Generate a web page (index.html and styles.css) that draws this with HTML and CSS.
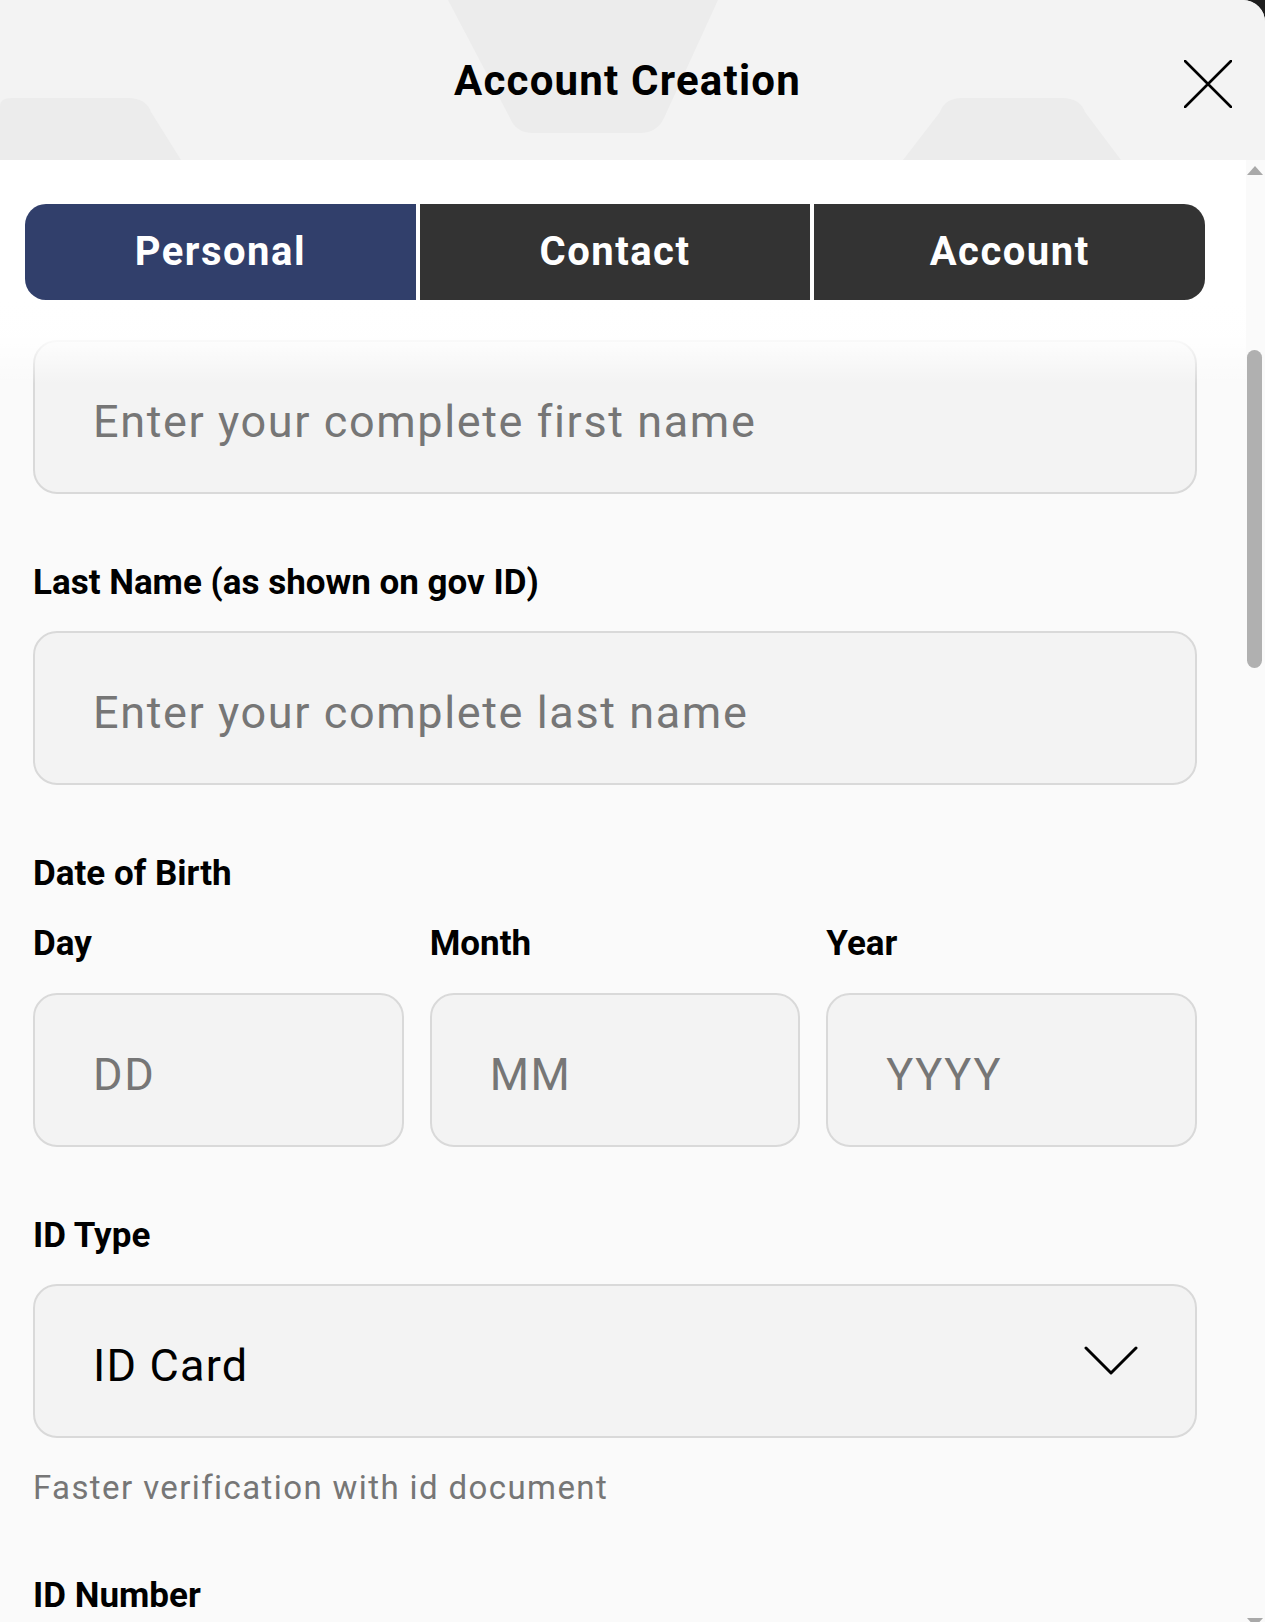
FILE: index.html
```html
<!DOCTYPE html>
<html lang="en">
<head>
<meta charset="utf-8">
<title>Account Creation</title>
<link rel="stylesheet" href="styles.css">
</head>
<body>
<div class="modal">
  <header class="modal-header">
    <svg class="header-art" viewBox="0 0 1265 160" preserveAspectRatio="none" aria-hidden="true">
      <path d="M448 0 H718 L664 118 Q657 133 640 133 H533 Q516 133 510 118 Z"/>
      <path d="M0 106 Q0 98 12 98 H128 Q146 98 151 112 L181 160 H0 Z"/>
      <path d="M940 112 Q945 98 962 98 H1062 Q1080 98 1085 112 L1121 160 H903 Z"/>
    </svg>
    <span></span>
    <h1 class="modal-title">Account Creation</h1>
    <button class="close-btn" type="button" aria-label="Close">
      <svg viewBox="0 0 48 48" width="48" height="48" aria-hidden="true">
        <path d="M1 1 L47 47 M47 1 L1 47" fill="none" stroke="#000" stroke-width="2.6" stroke-linecap="round"/>
      </svg>
    </button>
  </header>

  <div class="modal-body">
    <div class="pane">
      <nav class="tabs">
        <button class="tab tab-active" type="button">Personal</button>
        <button class="tab" type="button">Contact</button>
        <button class="tab" type="button">Account</button>
      </nav>

      <form class="form">
        <div class="field field-first">
          <input class="input" type="text" placeholder="Enter your complete first name">
        </div>

        <div class="field">
          <label class="label">Last Name (as shown on gov ID)</label>
          <input class="input" type="text" placeholder="Enter your complete last name">
        </div>

        <div class="field">
          <div class="label label-group">Date of Birth</div>
          <div class="dob">
            <div class="dob-col">
              <label class="label">Day</label>
              <input class="input" type="text" placeholder="DD">
            </div>
            <div class="dob-col">
              <label class="label">Month</label>
              <input class="input" type="text" placeholder="MM">
            </div>
            <div class="dob-col">
              <label class="label">Year</label>
              <input class="input" type="text" placeholder="YYYY">
            </div>
          </div>
        </div>

        <div class="field">
          <label class="label">ID Type</label>
          <div class="select">
            <span class="select-value">ID Card</span>
            <svg class="chevron" viewBox="0 0 54 30" width="54" height="30" aria-hidden="true">
              <path d="M2 2 L27 27 L52 2" fill="none" stroke="#000" stroke-width="3" stroke-linecap="round" stroke-linejoin="round"/>
            </svg>
          </div>
          <p class="helper">Faster verification with id document</p>
        </div>

        <div class="field">
          <label class="label">ID Number</label>
        </div>
      </form>
    </div>

    <div class="scroll-rail" aria-hidden="true">
      <span class="rail-arrow rail-up"></span>
      <span class="rail-thumb"></span>
      <span class="rail-arrow rail-down"></span>
    </div>
  </div>
</div>
</body>
</html>
```

FILE: styles.css
```css
* {
  box-sizing: border-box;
}

html, body {
  margin: 0;
  padding: 0;
}

body {
  background: #1e1e1e;
  font-family: Roboto, "Liberation Sans", Arial, sans-serif;
  color: #000;
}

.modal {
  width: 1265px;
  height: 1622px;
  background: #fafafa;
  border-top-right-radius: 22px;
  overflow: hidden;
  display: flex;
  flex-direction: column;
}

/* ---------- header ---------- */
.modal-header {
  position: relative;
  height: 160px;
  flex: none;
  background: #f3f3f3;
  display: grid;
  grid-template-columns: 1fr auto 1fr;
  align-items: center;
}

.header-art {
  position: absolute;
  inset: 0;
  width: 100%;
  height: 100%;
  fill: #ececec;
}

.modal-title {
  position: relative;
  margin: 2px 10px 0 0;
  font-size: 42px;
  font-weight: 700;
  letter-spacing: 1.2px;
  line-height: 1;
}

.close-btn {
  position: relative;
  justify-self: end;
  margin-right: 33px;
  margin-top: 7px;
  width: 48px;
  height: 48px;
  padding: 0;
  border: 0;
  background: none;
  display: flex;
}

/* ---------- body ---------- */
.modal-body {
  flex: 1;
  display: flex;
  min-height: 0;
  background: #fafafa;
}

.pane {
  flex: 1;
  padding: 44px 41px 0 25px;
  background: #fff;
}

.tabs {
  display: flex;
  gap: 4px;
  height: 96px;
  border-radius: 21px;
  overflow: hidden;
}

.tab {
  flex: 1;
  border: 0;
  background: #333333;
  color: #fff;
  font-family: inherit;
  font-size: 40px;
  font-weight: 700;
  letter-spacing: 1.5px;
  padding: 0 0 2px;
}

.tab-active {
  background: #313f6b;
}

/* ---------- form ---------- */
.form {
  position: relative;
  padding: 40px 49px 0 33px;
  margin: 0 -41px 0 -25px;
  background: #fafafa;
}

/* fade where the scrolled list meets the tabs */
.form::before {
  content: "";
  position: absolute;
  left: 0;
  right: 0;
  top: 0;
  height: 84px;
  background: linear-gradient(#fff 0%, rgba(255, 255, 255, 0.9) 45%, rgba(250, 250, 250, 0) 100%);
  pointer-events: none;
  z-index: 1;
}

.field {
  display: flex;
  flex-direction: column;
  margin-bottom: 67px;
}

.label {
  display: block;
  height: 40px;
  line-height: 44px;
  font-size: 35px;
  font-weight: 700;
  letter-spacing: 0;
  color: #000;
  margin-bottom: 30px;
  white-space: nowrap;
}

.input {
  width: 100%;
  height: 154px;
  border: 2px solid #d9d9d9;
  border-radius: 24px;
  background: #f3f3f3;
  padding: 8px 0 0 58px;
  font-family: inherit;
  font-size: 45px;
  color: #000;
  outline: none;
}

.input::placeholder {
  color: #767676;
  letter-spacing: 1.6px;
}

.dob {
  display: grid;
  grid-template-columns: repeat(3, 1fr);
  column-gap: 26px;
}

.dob-col {
  display: flex;
  flex-direction: column;
}

.dob-col .label {
  margin-bottom: 31px;
}

.select {
  height: 154px;
  border: 2px solid #d9d9d9;
  border-radius: 24px;
  background: #f3f3f3;
  display: flex;
  align-items: center;
  justify-content: space-between;
  padding: 8px 57px 0 58px;
}

.select-value {
  font-size: 45px;
  letter-spacing: 1.2px;
  color: #000;
}

.chevron {
  margin-top: -8px;
}

.helper {
  margin: 29px 0 0;
  height: 40px;
  line-height: 42px;
  font-size: 33px;
  letter-spacing: 1.4px;
  color: #767676;
}

/* ---------- scroll rail ---------- */
.scroll-rail {
  width: 19px;
  flex: none;
  background: #fafafa;
  display: flex;
  flex-direction: column;
  align-items: center;
  padding-right: 2px;
}

.rail-arrow {
  width: 0;
  height: 0;
  border-left: 8px solid transparent;
  border-right: 8px solid transparent;
}

.rail-up {
  margin-top: 6px;
  border-bottom: 9px solid #a9a9a9;
}

.rail-thumb {
  margin-top: 175px;
  width: 15px;
  height: 318px;
  border-radius: 8px;
  background: #b0b0b0;
}

.rail-down {
  margin-top: auto;
  margin-bottom: -5px;
  border-top: 9px solid #a9a9a9;
}
```
